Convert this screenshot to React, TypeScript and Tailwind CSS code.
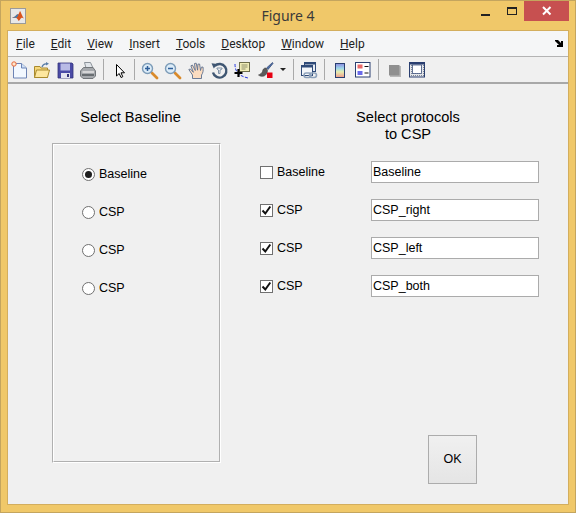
import React from "react";

const MENUS = ["File", "Edit", "View", "Insert", "Tools", "Desktop", "Window", "Help"];

const Icon = ({ children }: { children: React.ReactNode }) => (
  <svg width="16" height="18" viewBox="0 0 16 18" className="shrink-0 overflow-visible">
    {children}
  </svg>
);

const Sep = () => <div className="w-px h-[21px] bg-[#a9a9a9]" />;

const NewIcon = () => (
  <Icon>
    <path d="M2.500 2.500h8l5 4.500v10h-13z" fill="#f2f8ff" stroke="#6d84b5" />
    <path d="M10.500 2.500v4.500h5" fill="#cfe0f5" stroke="#6d84b5" />
    <circle cx="3" cy="3" r="2.200" fill="#fde6cc" stroke="#e8683a" />
  </Icon>
);

const OpenIcon = () => (
  <Icon>
    <path d="M0.500 16.500v-11h5.500l1 1.500h6.500v9.500z" fill="#f6d77a" stroke="#a98a2e" />
    <path d="M0.500 16.500l2-7.500h13l-2 7.500z" fill="#fde79f" stroke="#a98a2e" />
    <path d="M8 6c1-3 3-3.500 5-3" fill="none" stroke="#5a7ea8" strokeWidth="1.300" />
    <path d="M12 1l3 1.700-3 1.800z" fill="#5a7ea8" />
  </Icon>
);

const SaveIcon = () => (
  <Icon>
    <path d="M1 2h14l1 1v14H1z" fill="#4b4ba6" stroke="#33337a" strokeWidth="0.800" />
    <rect x="3.500" y="2.500" width="9.500" height="7" fill="#b9bbe6" />
    <rect x="4" y="12" width="9" height="5" fill="#e5e5ef" />
    <rect x="10" y="13" width="2" height="3" fill="#33337a" />
  </Icon>
);

const PrintIcon = () => (
  <Icon>
    <path d="M4.500 1.500h6l2.500 5.500h-7z" fill="#e2e6ea" stroke="#8d949b" />
    <path d="M0.500 10l3-3.500h9.500l2.500 3.500v5l-2.500 2.500H3l-2.500-2.500z" fill="#a6a9ad" stroke="#72767a" />
    <path d="M2.500 11h11.500" stroke="#e6e6e6" strokeWidth="1.500" />
    <path d="M2 14h12" stroke="#5e6266" strokeWidth="1.700" />
  </Icon>
);

const ArrowIcon = () => (
  <Icon>
    <path d="M5.500 3.500v11.500l2.700-2.500 1.800 4 1.800-.8-1.800-3.900h3.500z" fill="#fff" stroke="#000" />
  </Icon>
);

const Lens = ({ minus }: { minus?: boolean }) => (
  <Icon>
    <path d="M10 12l5 5" stroke="#d98a2b" strokeWidth="2.800" strokeLinecap="round" />
    <circle cx="5.500" cy="7.500" r="5" fill="#dcecf8" stroke="#7d9cb8" strokeWidth="1.400" />
    <path d="M3 7.500h5" stroke="#2f5f9a" strokeWidth="1.500" />
    {!minus && <path d="M5.500 5v5" stroke="#2f5f9a" strokeWidth="1.500" />}
  </Icon>
);

const HandIcon = () => (
  <Icon>
    <path
      d="M0.800 8.500l3.700 5.500v3.500h9v-3.500c1.500-2 2-4.500 1.500-8l-1.600.2-.9 3.300-.9-6.500-1.700.2-.3 6-1.400-7-1.700.3.800 7-2.900-5.500-1.500.8 2.500 6.500-3-3.300z"
      fill="#fbdcc0"
      stroke="#5c6f8e"
      strokeLinejoin="round"
      strokeWidth="0.900"
    />
  </Icon>
);

const RotateIcon = () => (
  <Icon>
    <path d="M3.800 5a6.800 6.800 0 1 1-1.800 6.500" fill="none" stroke="#3f5672" strokeWidth="2.400" />
    <path d="M0.500 2.300l5.800.7-3.500 4.500z" fill="#3f5672" />
    <path d="M6 7h5v1l-2 1v3.500h-1.500v-3.500l-1.500-1z" fill="none" stroke="#7f91a6" />
  </Icon>
);

const CursorIcon = () => (
  <Icon>
    <path d="M1 3c0 6 2 8 4 10s5 3 9 4" fill="none" stroke="#2233dd" strokeWidth="1" strokeDasharray="3 1.500" />
    <rect x="5.500" y="1.500" width="10" height="9" fill="#f0edb8" stroke="#6e6e4c" />
    <path d="M7.500 4h6M7.500 6h6M7.500 8h4" stroke="#8f8f6a" />
    <path d="M4.500 8v8M0.500 12h8" stroke="#000" strokeWidth="2.200" />
  </Icon>
);

const BrushIcon = () => (
  <Icon>
    <path d="M15.500 1.500l-6 5.500 1.500 1.500 5-6z" fill="#4d6fa8" stroke="#2e4470" strokeWidth="0.700" />
    <path d="M9 7c-2.500 0-3 1.500-3.500 3.500-.4 1.500-2.500 3-4 3.500 2.500 2 6 1.500 7.500-.5 1-1.500 1.500-3 1.500-4z" fill="#5a5a5a" stroke="#3a3a3a" strokeWidth="0.600" />
    <rect x="10" y="11.500" width="5.500" height="5.500" fill="#e60012" />
  </Icon>
);

const LinkIcon = () => (
  <Icon>
    <rect x="3.500" y="1.500" width="11" height="9" fill="#e9eef5" stroke="#2f4a78" />
    <path d="M3.500 2.500h11" stroke="#2f4a78" strokeWidth="2" />
    <rect x="0.500" y="4.500" width="11" height="10" fill="#f4f7fb" stroke="#2f4a78" />
    <path d="M0.500 5.500h11" stroke="#2f4a78" strokeWidth="2" />
    <rect x="3" y="12" width="7" height="4.500" rx="2.200" fill="none" stroke="#8ea2bb" strokeWidth="1.600" />
    <rect x="8.500" y="12" width="7" height="4.500" rx="2.200" fill="none" stroke="#8ea2bb" strokeWidth="1.600" />
  </Icon>
);

const ColorbarIcon = () => (
  <Icon>
    <defs>
      <linearGradient id="cbar" x1="0" y1="0" x2="0" y2="1">
        <stop offset="0" stopColor="#8a8ae0" />
        <stop offset="0.35" stopColor="#9fd8e8" />
        <stop offset="0.6" stopColor="#e8eeb0" />
        <stop offset="1" stopColor="#ee9a8c" />
      </linearGradient>
    </defs>
    <rect x="3.500" y="2.500" width="9" height="14" fill="url(#cbar)" stroke="#2a3f70" />
  </Icon>
);

const LegendIcon = () => (
  <Icon>
    <rect x="0.500" y="1.500" width="14.500" height="14.500" fill="#fff" stroke="#2a3f70" />
    <rect x="2.500" y="3.500" width="5" height="4" fill="#ea6a6a" />
    <rect x="2.500" y="10" width="5" height="4" fill="#6a6aea" />
    <path d="M9.500 5.500h4M9.500 12h4" stroke="#111" />
  </Icon>
);

const GrayIcon = () => (
  <Icon>
    <rect x="4" y="5" width="11" height="11" fill="#b8b8b8" />
    <rect x="3" y="4" width="10.500" height="10.500" fill="#8f8f8f" />
  </Icon>
);

const PlotToolsIcon = () => (
  <Icon>
    <defs>
      <pattern id="hatch" width="2" height="2" patternUnits="userSpaceOnUse">
        <rect width="2" height="2" fill="#e4e6ea" />
        <rect width="1" height="1" fill="#7f8794" />
      </pattern>
    </defs>
    <rect x="0.500" y="1.500" width="15" height="14.500" fill="url(#hatch)" stroke="#2a3f70" />
    <path d="M0.500 2.500h15" stroke="#2a3f70" strokeWidth="2" />
    <rect x="3.500" y="4" width="9" height="8.500" fill="#fff" stroke="#2a3f70" strokeWidth="0.700" />
  </Icon>
);

const MatlabLogo = () => (
  <svg width="16" height="16" viewBox="0 0 16 16">
    <rect x="0.500" y="0.500" width="15" height="15" fill="#e8e8e8" stroke="#9a9a9a" />
    <path d="M2 10l3-1.500 2-2 1.500-.2 1.500-3.300c1 1 2 5 4 7.500-1.500-.8-2-1-3-.2-1 1-1.500 2.500-2.500 2.700-.5-1.500-1-2.500-2.500-3.300-1 0-2 0-4 .3z" fill="#d9541e" />
    <path d="M2 10l3-1.500 2-2 1.500-.2c-.5 1.500-1 2.500-2 3.500-1-.3-2.500 0-4.500.2z" fill="#3e7fb5" />
  </svg>
);

const Radio = ({ label, on }: { label: string; on?: boolean }) => (
  <label className="flex items-center h-[13px] gap-1">
    <span className="w-[13px] h-[13px] rounded-full border border-[#707070] bg-white flex items-center justify-center">
      {on && <span className="w-[7px] h-[7px] rounded-full bg-[#1f1f1f]" />}
    </span>
    <span>{label}</span>
  </label>
);

const Check = ({ label, value, on }: { label: string; value: string; on?: boolean }) => (
  <div className="flex items-center h-[22px]">
    <div className="w-[112px] flex items-center gap-1 pl-px">
      <span className="w-[13px] h-[13px] border border-[#707070] bg-white flex items-center justify-center">
        {on && (
          <svg width="11" height="11" viewBox="0 0 11 11">
            <path d="M1.500 5.500l2.800 3 5-7" fill="none" stroke="#111" strokeWidth="2" />
          </svg>
        )}
      </span>
      <span>{label}</span>
    </div>
    <input
      readOnly
      defaultValue={value}
      className="w-[168px] h-[22px] border border-[#ababab] bg-white px-px outline-none text-black"
    />
  </div>
);

export default function App() {
  return (
    <div className="w-[576px] h-[513px] flex flex-col bg-[#f0c869] border border-[#c4a55e] overflow-hidden font-['Liberation_Sans',sans-serif] text-[12.5px] text-black">
      {/* title bar */}
      <div className="h-[29px] shrink-0 grid grid-cols-[1fr_auto_1fr]">
        <div className="pl-[9px] pt-[7px]">
          <MatlabLogo />
        </div>
        <div className="pt-[5px] font-['Noto_Sans',sans-serif] text-[14px] leading-[19px] text-[#3a3a3a]">Figure 4</div>
        <div className="flex justify-end items-start pr-[6px]">
          <div className="w-[9px] h-[2px] bg-[#222] mt-[13px]" />
          <div className="w-[10px] h-[8px] border border-t-2 border-[#222] mt-[6px] ml-[17px]" />
          <div className="w-[45px] h-[20px] bg-[#c75050] ml-[7px] flex items-center justify-center">
            <svg width="10" height="10" viewBox="0 0 10 10">
              <path d="M1 1l7.500 7.500M8.500 1L1 8.500" stroke="#fff" strokeWidth="2" />
            </svg>
          </div>
        </div>
      </div>

      {/* client area */}
      <div className="flex-1 mx-[6px] mb-[7px] flex flex-col border border-[#d3ae5e] min-h-0">
        {/* menu */}
        <div className="h-[26px] shrink-0 bg-[#f5f6f7] border-b border-[#b4b4b4] flex items-center justify-between pl-[8px] pr-[5px] font-['Roboto',sans-serif] text-[12px] text-[#222]">
          <div className="flex gap-[16px]">
            {MENUS.map((m) => (
              <span key={m}>
                <span className="underline">{m[0]}</span>
                {m.slice(1)}
              </span>
            ))}
          </div>
          <svg width="8" height="7" viewBox="0 0 8 7">
            <path d="M0 0h3l3 3V1h2v6H2V5h2L0 1z" fill="#000" />
          </svg>
        </div>

        {/* toolbar */}
        <div className="h-[27px] shrink-0 border-b-2 border-[#a8a8a8] bg-[#f0f0f0] flex items-center gap-[7px] pl-[3px]">
          <NewIcon />
          <OpenIcon />
          <SaveIcon />
          <PrintIcon />
          <Sep />
          <ArrowIcon />
          <Sep />
          <Lens />
          <Lens minus />
          <HandIcon />
          <RotateIcon />
          <CursorIcon />
          <BrushIcon />
          <div className="w-0 h-0 border-x-[3px] border-x-transparent border-t-[3px] border-t-[#222]" />
          <Sep />
          <LinkIcon />
          <Sep />
          <ColorbarIcon />
          <LegendIcon />
          <Sep />
          <GrayIcon />
          <PlotToolsIcon />
        </div>

        {/* figure */}
        <div className="flex-1 bg-[#f0f0f0] flex pl-[44px] pt-[25px] gap-[38px]">
          <div className="w-[169px]">
            <div className="h-[17px] leading-[17px] text-[14.600px] text-center pr-[12px] mb-[17px]">Select Baseline</div>
            <div className="h-[320px] border border-t-[#b0b0b0] border-l-[#b0b0b0] border-r-white border-b-white">
              <div className="h-full border border-t-white border-l-white border-r-[#b0b0b0] border-b-[#b0b0b0] pl-[28px] pt-[23px] flex flex-col gap-[25px]">
                <Radio label="Baseline" on />
                <Radio label="CSP" />
                <Radio label="CSP" />
                <Radio label="CSP" />
              </div>
            </div>
          </div>
          <div className="w-[280px]">
            <div className="leading-[17px] text-[14.600px] text-center pl-[18px] mb-[18px]">
              Select protocols
              <br />
              to CSP
            </div>
            <div className="flex flex-col gap-[16px]">
              <Check label="Baseline" value="Baseline" />
              <Check label="CSP" value="CSP_right" on />
              <Check label="CSP" value="CSP_left" on />
              <Check label="CSP" value="CSP_both" on />
            </div>
            <div className="pl-[169px] pt-[138px]">
              <button className="w-[49px] h-[49px] border border-[#acacac] bg-gradient-to-b from-[#f0f0f0] to-[#e5e5e5] text-[12.500px]">
                OK
              </button>
            </div>
          </div>
        </div>
      </div>
    </div>
  );
}
